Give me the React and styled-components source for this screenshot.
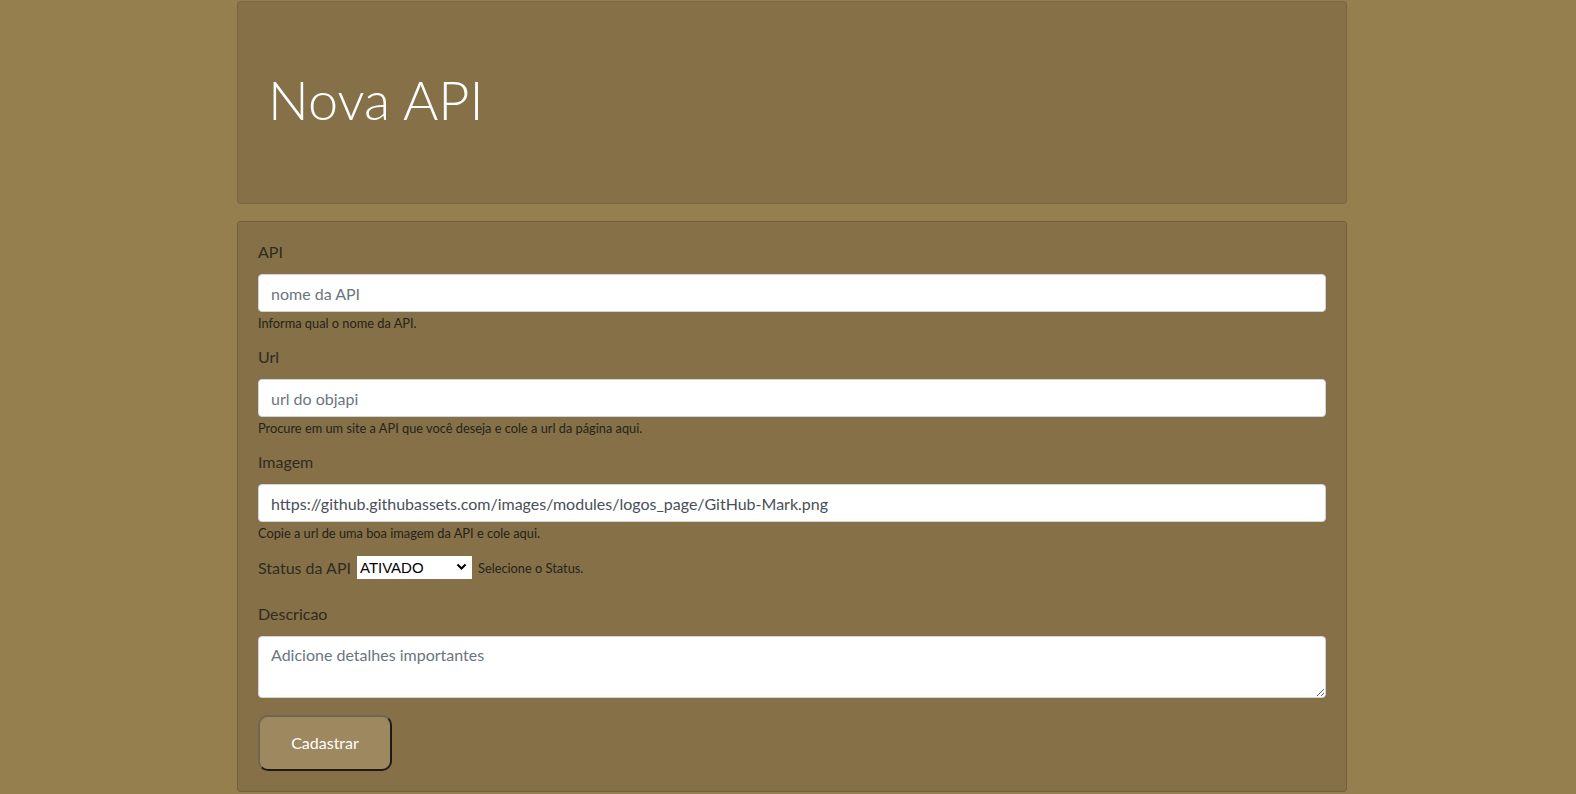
import React, { useState } from "react";
import styled, { createGlobalStyle } from "styled-components";

const GlobalStyle = createGlobalStyle`
  body {
    margin: 0;
    background: #967f4f;
    font-family: Lato, "Open Sans", sans-serif;
    color: #2a2a2a;
  }
  * {
    box-sizing: border-box;
  }
`;

const Page = styled.div`
  width: 1118px;
  margin: 0 auto;
  padding: 1px 0 0 8px;
`;

const Jumbotron = styled.header`
  background: #857047;
  border: 1px solid rgba(0, 0, 0, 0.08);
  border-radius: 4px;
  padding: 64px 30px 62px;
  margin-bottom: 17px;
`;

const Title = styled.h1`
  margin: 0 0 8px;
  font-size: 54px;
  font-weight: 300;
  line-height: 67px;
  color: #ffffff;
`;

const Card = styled.main`
  background: #857047;
  border: 1px solid rgba(0, 0, 0, 0.14);
  border-radius: 4px;
  padding: 18px 20px 20px;
`;

const FormGroup = styled.div`
  margin-bottom: ${props => props.mb || "12px"};
`;

const Label = styled.label`
  display: block;
  font-size: 16px;
  line-height: 24px;
  margin-bottom: 10px;
  color: #302b22;
`;

const Input = styled.input`
  display: block;
  width: 100%;
  height: 38px;
  padding: 6px 12px;
  font-family: Lato, "Open Sans", sans-serif;
  font-size: 16px;
  line-height: 24px;
  color: #495057;
  background: #ffffff;
  border: 1px solid #ced4da;
  border-radius: 4px;

  &::placeholder {
    color: #6c757d;
  }
`;

const TextArea = styled.textarea`
  display: block;
  width: 100%;
  height: 62px;
  padding: 6px 12px;
  font-family: Lato, "Open Sans", sans-serif;
  font-size: 16px;
  line-height: 24px;
  color: #495057;
  background: #ffffff;
  border: 1px solid #ced4da;
  border-radius: 4px;

  &::placeholder {
    color: #6c757d;
  }
`;

const Help = styled.small`
  display: block;
  margin: 2px 0 2px;
  font-size: 12.8px;
  line-height: 19.2px;
  color: #26231c;
`;

const StatusRow = styled.div`
  display: flex;
  align-items: center;
  gap: 6px;
  height: 24px;
  margin-bottom: 22px;
  font-size: 16px;
  color: #302b22;
`;

const InlineHelp = styled.small`
  font-size: 12.8px;
  color: #26231c;
`;

const SelectWrap = styled.span`
  position: relative;
  display: inline-flex;
`;

const Select = styled.select`
  appearance: none;
  width: 115px;
  height: 23px;
  padding: 0 20px 0 3px;
  border: none;
  border-radius: 0;
  background: #ffffff;
  font-family: "Liberation Sans", Arial, sans-serif;
  font-size: 15px;
  color: #000000;
`;

const Chevron = styled.svg`
  position: absolute;
  right: 5px;
  top: 7px;
  pointer-events: none;
`;

const Button = styled.button`
  width: 134px;
  height: 56px;
  margin-top: 17px;
  background: #9e8860;
  color: #ffffff;
  font-family: Lato, "Open Sans", sans-serif;
  font-size: 16px;
  border: 2px solid;
  border-color: #6f6652 #1e1b16 #1e1b16 #6f6652;
  border-radius: 10px;
  cursor: pointer;
`;

const App = () => {
  const [status, setStatus] = useState("ATIVADO");

  return (
    <>
      <GlobalStyle />
      <Page>
        <Jumbotron>
          <Title>Nova API</Title>
        </Jumbotron>
        <Card>
          <form onSubmit={e => e.preventDefault()}>
            <FormGroup>
              <Label htmlFor="api">API</Label>
              <Input id="api" placeholder="nome da API" />
              <Help>Informa qual o nome da API.</Help>
            </FormGroup>
            <FormGroup>
              <Label htmlFor="url">Url</Label>
              <Input id="url" placeholder="url do objapi" />
              <Help>Procure em um site a API que você deseja e cole a url da página aqui.</Help>
            </FormGroup>
            <FormGroup>
              <Label htmlFor="imagem">Imagem</Label>
              <Input
                id="imagem"
                defaultValue="https://github.githubassets.com/images/modules/logos_page/GitHub-Mark.png"
              />
              <Help>Copie a url de uma boa imagem da API e cole aqui.</Help>
            </FormGroup>
            <StatusRow>
              <span>Status da API</span>
              <SelectWrap>
                <Select value={status} onChange={e => setStatus(e.target.value)}>
                  <option>ATIVADO</option>
                  <option>DESATIVADO</option>
                </Select>
                <Chevron width="11" height="8" viewBox="0 0 11 8">
                  <path d="M1.5 1.5 L5.5 5.5 L9.5 1.5" fill="none" stroke="#000" strokeWidth="2" />
                </Chevron>
              </SelectWrap>
              <InlineHelp>Selecione o Status.</InlineHelp>
            </StatusRow>
            <FormGroup mb="0">
              <Label htmlFor="descricao">Descricao</Label>
              <TextArea id="descricao" rows="2" placeholder="Adicione detalhes importantes" />
            </FormGroup>
            <Button type="submit">Cadastrar</Button>
          </form>
        </Card>
      </Page>
    </>
  );
};

export default App;
